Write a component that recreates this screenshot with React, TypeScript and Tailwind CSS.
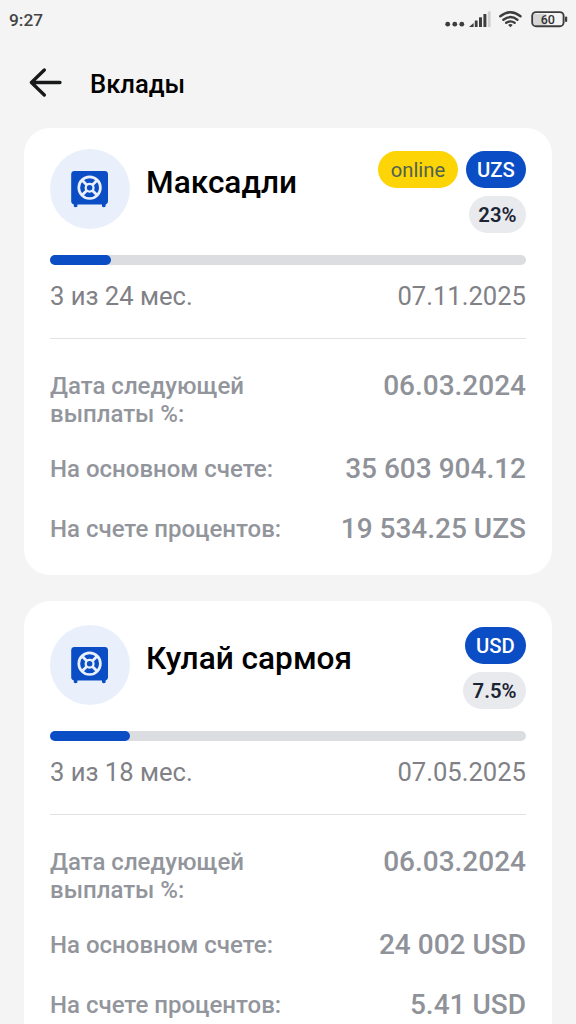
import React from "react";

type Deposit = {
  name: string;
  online?: boolean;
  currency: string;
  rate: string;
  progress: number;
  term: string;
  endDate: string;
  nextPayment: string;
  mainBalance: string;
  interestBalance: string;
};

const deposits: Deposit[] = [
  {
    name: "Максадли",
    online: true,
    currency: "UZS",
    rate: "23%",
    progress: 12.9,
    term: "3 из 24 мес.",
    endDate: "07.11.2025",
    nextPayment: "06.03.2024",
    mainBalance: "35 603 904.12",
    interestBalance: "19 534.25 UZS",
  },
  {
    name: "Кулай сармоя",
    currency: "USD",
    rate: "7.5%",
    progress: 16.8,
    term: "3 из 18 мес.",
    endDate: "07.05.2025",
    nextPayment: "06.03.2024",
    mainBalance: "24 002 USD",
    interestBalance: "5.41 USD",
  },
];

function StatusBar() {
  return (
    <div className="flex h-10 shrink-0 items-center justify-between pl-[9px] pr-2 text-[#444444]">
      <span className="text-[17.3px] leading-10 font-medium">9:27</span>
      <svg width="124" height="24" viewBox="444 8 124 24" fill="none">
        <g fill="#3d3d3d">
          <circle cx="447.7" cy="24.2" r="2.4" />
          <circle cx="454.8" cy="24.2" r="2.4" />
          <circle cx="461.8" cy="24.2" r="2.4" />
          <path d="M469 26.9l4.6-3.9v3.9z" />
          <rect x="474.8" y="20.5" width="2.8" height="6.4" rx=".5" />
          <rect x="479" y="17.3" width="3" height="9.6" rx=".5" />
          <rect x="483.4" y="14" width="3" height="12.9" rx=".5" />
          <rect x="487.8" y="11.3" width="2.8" height="15.6" rx=".5" fill="#cfcfcf" />
          <path d="M510.4 27.2l-2.3-2.3q2.3-1.6 4.6 0z" />
        </g>
        <g stroke="#3d3d3d" strokeWidth="2.4" strokeLinecap="round">
          <path d="M500.3 16.2q10.1-7.9 20.2 0" />
          <path d="M503.4 19.7q7-5.2 14 0" />
          <path d="M506.2 22.8q4.2-2.8 8.4 0" />
        </g>
        <rect x="533.5" y="14" width="13" height="11" fill="#d6d6d6" />
        <rect x="532.2" y="12.1" width="31.4" height="14.2" rx="3.8" stroke="#3d3d3d" strokeWidth="1.9" />
        <rect x="565" y="16.6" width="2.2" height="5.4" rx="1" fill="#3d3d3d" />
        <text x="547.8" y="23.6" textAnchor="middle" fill="#333333" fontSize="12.5" fontWeight="500">
          60
        </text>
      </svg>
    </div>
  );
}

function SafeIcon() {
  return (
    <svg width="38" height="38" viewBox="0.8 0 38 38" fill="none">
      <rect x="1" y="1" width="36.8" height="33.4" rx="3.4" fill="#0b4dc4" />
      <path d="M3.6 33h3.6v3.4q-1.8 1.6-3.6 0zM31.8 33h3.6v3.4q-1.8 1.6-3.6 0z" fill="#0b4dc4" />
      <g stroke="#e9f0fb">
        <circle cx="19.4" cy="17.7" r="10.8" strokeWidth="2.7" />
        <circle cx="19.4" cy="17.7" r="3.9" strokeWidth="2.3" />
        <path
          d="M12 10.3l4.6 4.6M26.8 10.3l-4.6 4.6M12 25.1l4.6-4.6M26.8 25.1l-4.6-4.6"
          strokeWidth="2.8"
        />
      </g>
    </svg>
  );
}

function Row({ label, value }: { label: React.ReactNode; value: string }) {
  return (
    <div className="flex items-start justify-between">
      <span className="text-[24px] leading-7 font-medium text-[#92959c]">{label}</span>
      <span className="text-[28px] leading-7 font-medium whitespace-nowrap text-[#8f9299]">{value}</span>
    </div>
  );
}

function DepositCard({ d }: { d: Deposit }) {
  return (
    <section className="shrink-0 rounded-[26px] bg-white px-[26px] pt-6 pb-8 first:pt-[21px]">
      <div className="flex h-20 items-start">
        <div className="flex size-20 shrink-0 items-center justify-center rounded-full bg-[#e9f0fb]">
          <SafeIcon />
        </div>
        <h2 className="ml-4 pt-[14px] text-[31.6px] leading-10 font-medium whitespace-nowrap text-black">
          {d.name}
        </h2>
        <div className="ml-auto flex flex-col items-end gap-2 pt-0.5 text-[20.3px] leading-[39px]">
          <div className="flex gap-2">
            {d.online && (
              <span className="h-[37px] rounded-full bg-[#fdd406] px-[12.5px] text-[20.2px] text-[#4f6252]">
                online
              </span>
            )}
            <span className="h-[37px] rounded-full bg-[#0b4dc4] px-[11.3px] font-medium text-white">
              {d.currency}
            </span>
          </div>
          <span className="h-[37px] rounded-full bg-[#e8eaed] px-[9.5px] font-semibold text-[#1b2433]">
            {d.rate}
          </span>
        </div>
      </div>
      <div className="mt-[26px] h-[9.5px] rounded-full bg-[#dbdde1]">
        <div className="h-full rounded-full bg-[#0b4dc4]" style={{ width: `${d.progress}%` }} />
      </div>
      <div className="mt-[15.5px] flex justify-between text-[25.6px] leading-8 text-[#7f8186]">
        <span>{d.term}</span>
        <span>{d.endDate}</span>
      </div>
      <div className="mt-[26px] h-px bg-[#e2e2e4]" />
      <div className="mt-[33px] flex flex-col">
        <Row
          label={
            <>
              Дата следующей
              <br />
              выплаты %:
            </>
          }
          value={d.nextPayment}
        />
        <div className="mt-[27px] flex flex-col gap-8">
          <Row label="На основном счете:" value={d.mainBalance} />
          <Row label="На счете процентов:" value={d.interestBalance} />
        </div>
      </div>
    </section>
  );
}

export default function App() {
  return (
    <div className="flex h-screen flex-col overflow-hidden bg-[#f4f4f4] font-['Roboto',sans-serif]">
      <StatusBar />
      <header className="flex h-[88px] shrink-0 items-center pl-[29px]">
        <svg className="mb-[3px]" width="34" height="30" viewBox="0 0 34 30" fill="none">
          <path
            d="M15.3 2L2.4 14.5L15.3 27M2.8 14.5H31"
            stroke="#17191b"
            strokeWidth="3.3"
            strokeLinecap="round"
            strokeLinejoin="round"
          />
        </svg>
        <h1 className="mb-px ml-[27px] text-[25.6px] leading-8 font-medium text-black">Вклады</h1>
      </header>
      <main className="flex flex-col gap-[26px] px-6">
        {deposits.map((d) => (
          <DepositCard key={d.name} d={d} />
        ))}
      </main>
    </div>
  );
}
